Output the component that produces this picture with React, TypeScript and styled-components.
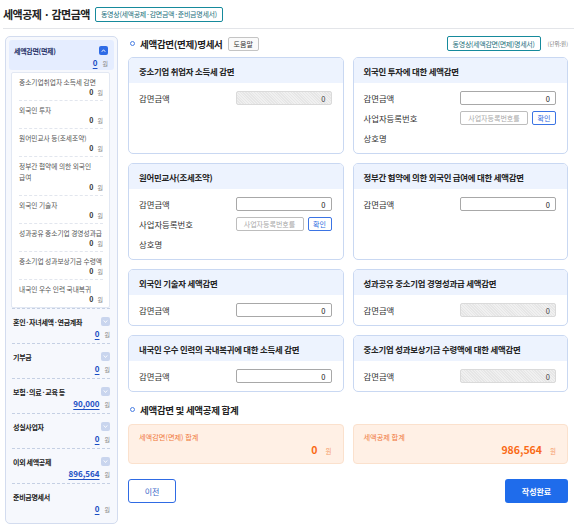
import React from "react";
import styled, { createGlobalStyle, css } from "styled-components";

const GlobalStyle = createGlobalStyle`
  html, body { margin: 0; padding: 0; background: #fff; }
  body {
    font-family: "Noto Sans CJK KR", "Noto Sans", sans-serif;
    color: #222;
    -webkit-font-smoothing: antialiased;
    word-break: keep-all;
  }
  * { box-sizing: border-box; }
  button, input { font-family: inherit; }
`;

const Page = styled.div`
  width: 574px;
  height: 529px;
  overflow: hidden;
  background: #fff;
`;

const TopBar = styled.header`
  margin-left: 3px;
  height: 29px;
  display: flex;
  align-items: center;
  gap: 5px;
  border-bottom: 1px solid #e3e5e9;
`;

const PageTitle = styled.h1`
  margin: 0;
  font-size: 11px;
  font-weight: 700;
  letter-spacing: -0.5px;
  color: #222;
`;

const VideoButton = styled.button`
  height: 15px;
  padding: 0 5px;
  border: 1px solid #168a9c;
  border-radius: 2px;
  background: #fff;
  color: #1a6f7d;
  font-size: 7px;
  letter-spacing: -0.3px;
  white-space: nowrap;
`;

const Body = styled.div`
  display: flex;
  gap: 10px;
  padding: 7px 6px 0 5px;
`;

/* ---------- sidebar ---------- */

const Sidebar = styled.aside`
  width: 113px;
  height: 488px;
  flex: none;
  overflow: hidden;
  border: 1px solid #d3dcef;
  border-radius: 5px;
  background: #f6f8fd;
  padding: 3px;
`;

const ActiveItem = styled.div`
  height: 30px;
  background: #e5edff;
  border-radius: 3px;
  padding: 4px 6px 0 5px;
`;

const ItemHead = styled.div`
  display: flex;
  align-items: center;
  justify-content: space-between;
  height: 13px;
`;

const GroupLabel = styled.span<{ $tone?: "navy" | "dark" }>`
  font-size: 7px;
  font-weight: 700;
  letter-spacing: -0.3px;
  color: ${(p) => (p.$tone === "navy" ? "#1f2f66" : "#222")};
`;

const ValueLine = styled.div`
  display: flex;
  justify-content: flex-end;
  align-items: baseline;
  gap: 5px;
  height: 12px;
  line-height: 12px;
`;

const Amount = styled.span<{ $linked?: boolean }>`
  font-size: 8px;
  font-weight: 700;
  ${(p) =>
    p.$linked
      ? css`
          color: #1c4fc4;
          text-decoration: underline;
          text-underline-offset: 2px;
        `
      : css`
          color: #333;
        `}
`;

const Won = styled.span`
  font-size: 6px;
  color: #888;
`;

const SubBox = styled.div`
  margin: 2px 4px 0 2px;
  background: #fff;
  border: 1px solid #e2e8f3;
  border-radius: 2px;
  padding: 0 6px 0 7px;
`;

const SubItem = styled.div`
  padding: 4px 0 3px;
  border-bottom: 1px dashed #e2e6ee;
  &:last-child {
    border-bottom: none;
  }
`;

const SubLabel = styled.div`
  font-size: 6.7px;
  line-height: 11px;
  color: #555;
  word-break: keep-all;
`;

const SubValue = styled.div`
  display: flex;
  justify-content: flex-end;
  align-items: baseline;
  gap: 4px;
  line-height: 9px;
`;

const SubAmount = styled.span`
  font-size: 7px;
  font-weight: 700;
  color: #333;
`;

const Group = styled.div`
  margin: 0 4px 0 3px;
  padding: 6px 0 4px 1px;
  height: 35px;
  border-top: 1px dashed #c5d0e4;
  &:first-of-type {
    margin-top: 4px;
  }
`;

const ChevronBox = styled.span<{ $active?: boolean }>`
  width: 9px;
  height: 9px;
  border-radius: 2px;
  background: ${(p) => (p.$active ? "#2e6be6" : "#c9d5ee")};
  display: inline-flex;
  align-items: center;
  justify-content: center;
`;

function Chevron({ up }: { up?: boolean }) {
  return (
    <ChevronBox $active={up}>
      <svg width="5" height="5" viewBox="0 0 10 10">
        <polyline
          points={up ? "2,7 5,3.5 8,7" : "2,3.5 5,7 8,3.5"}
          fill="none"
          stroke="#fff"
          strokeWidth="1.8"
          strokeLinecap="round"
          strokeLinejoin="round"
        />
      </svg>
    </ChevronBox>
  );
}

/* ---------- main ---------- */

const Main = styled.main`
  flex: 1;
  min-width: 0;
`;

const SectionHead = styled.div<{ $gap?: number }>`
  display: flex;
  align-items: center;
  height: 15px;
  margin-top: ${(p) => p.$gap ?? 0}px;
`;

const Ring = styled.span`
  width: 5px;
  height: 5px;
  border: 1.2px solid #4a7fe2;
  border-radius: 50%;
  margin: 0 5px 0 2px;
`;

const SectionTitle = styled.h2`
  margin: 0;
  font-size: 9.5px;
  font-weight: 700;
  letter-spacing: -0.3px;
  color: #222;
`;

const HelpButton = styled.button`
  margin-left: 5px;
  height: 14px;
  padding: 0 5px;
  border: 1px solid #c4c4c4;
  border-radius: 2px;
  background: #fafafa;
  color: #333;
  font-size: 7px;
`;

const HeadRight = styled.div`
  margin-left: auto;
  display: flex;
  align-items: center;
  gap: 7px;
`;

const Unit = styled.span`
  font-size: 5.5px;
  color: #777;
`;

const CardGrid = styled.div`
  margin-top: 6px;
  display: grid;
  grid-template-columns: 1fr 1fr;
  gap: 9px;
`;

const Card = styled.section`
  border: 1px solid #c9d8f2;
  border-radius: 5px;
  overflow: hidden;
  background: #fff;
`;

const CardHeader = styled.div`
  height: 25px;
  display: flex;
  align-items: center;
  padding: 0 10px;
  background: #edf3fe;
  font-size: 8.4px;
  font-weight: 700;
  letter-spacing: -0.2px;
  color: #222;
  white-space: nowrap;
`;

const CardBody = styled.div`
  padding: 8px 11px 8px 10px;
  display: flex;
  flex-direction: column;
  gap: 6px;
`;

const FieldRow = styled.div`
  display: flex;
  align-items: center;
  justify-content: space-between;
  height: 14px;
`;

const FieldLabel = styled.span`
  font-size: 8.4px;
  color: #333;
`;

const AmountInput = styled.input`
  width: 96px;
  height: 14px;
  padding: 0 5px;
  border: 1px solid #a8a8a8;
  border-radius: 2px;
  text-align: right;
  font-size: 7.5px;
  color: #222;
  background: #fff;
  outline: none;
  &:disabled {
    border-color: #dadada;
    color: #444;
    background: repeating-linear-gradient(
      45deg,
      #e6e6e6 0 1px,
      #f0f0f0 1px 2px
    );
  }
`;

const BizGroup = styled.div`
  display: flex;
  gap: 4px;
`;

const BizInput = styled.input`
  width: 68px;
  height: 14px;
  padding: 0 3px;
  border: 1px solid #bdbdbd;
  border-radius: 2px;
  font-size: 7px;
  text-align: center;
  outline: none;
  &::placeholder {
    color: #a9a9a9;
  }
`;

const ConfirmButton = styled.button`
  width: 24px;
  height: 14px;
  padding: 0;
  border: 1px solid #3b74e4;
  border-radius: 2px;
  background: #fff;
  color: #2f6be0;
  font-size: 7px;
`;

const TotalGrid = styled.div`
  margin-top: 7px;
  display: grid;
  grid-template-columns: 1fr 1fr;
  gap: 9px;
`;

const TotalCard = styled.div`
  height: 40px;
  padding: 6px 11px 0 10px;
  background: #fff0e5;
  border: 1px solid #fbe1cd;
  border-radius: 4px;
`;

const TotalLabel = styled.div`
  font-size: 7.2px;
  line-height: 12px;
  color: #f0783c;
`;

const TotalValue = styled.div`
  display: flex;
  justify-content: flex-end;
  align-items: baseline;
  gap: 8px;
  line-height: 14px;
`;

const TotalAmount = styled.span`
  font-size: 10.5px;
  font-weight: 700;
  color: #fa6a16;
`;

const TotalWon = styled.span`
  font-size: 6.5px;
  color: #f59a68;
`;

const Actions = styled.div`
  margin-top: 15px;
  display: flex;
  justify-content: space-between;
`;

const ActionButton = styled.button<{ $primary?: boolean }>`
  height: 24px;
  border-radius: 3px;
  font-size: 8px;
  ${(p) =>
    p.$primary
      ? css`
          width: 63px;
          border: none;
          background: #1f6ceb;
          color: #fff;
          font-weight: 700;
        `
      : css`
          width: 48px;
          border: 1px solid #2f6be4;
          background: #fff;
          color: #3a66c9;
        `}
`;

/* ---------- data ---------- */

const subItems = [
  "중소기업취업자 소득세 감면",
  "외국인 투자",
  "원어민교사 등(조세조약)",
  "정부간 협약에 의한 외국인 급여",
  "외국인 기술자",
  "성과공유 중소기업 경영성과급",
  "중소기업 성과보상기금 수령액",
  "내국인 우수 인력 국내복귀",
];

const groups = [
  { label: "혼인·자녀세액·연금계좌", value: "0", chevron: true },
  { label: "기부금", value: "0", chevron: true },
  { label: "보험·의료·교육 등", value: "90,000", chevron: true },
  { label: "성실사업자", value: "0", chevron: true },
  { label: "이외 세액공제", value: "896,564", chevron: true },
  { label: "준비금명세서", value: "0", chevron: false },
];

type CardDef = { title: string; disabled?: boolean; biz?: boolean };

const cards: CardDef[] = [
  { title: "중소기업 취업자 소득세 감면", disabled: true },
  { title: "외국인 투자에 대한 세액감면", biz: true },
  { title: "원어민교사(조세조약)", biz: true },
  { title: "정부간 협약에 의한 외국인 급여에 대한 세액감면" },
  { title: "외국인 기술자 세액감면" },
  { title: "성과공유 중소기업 경영성과급 세액감면", disabled: true },
  { title: "내국인 우수 인력의 국내복귀에 대한 소득세 감면" },
  { title: "중소기업 성과보상기금 수령액에 대한  세액감면", disabled: true },
];

function ReliefCard({ title, disabled, biz }: CardDef) {
  return (
    <Card>
      <CardHeader>{title}</CardHeader>
      <CardBody>
        <FieldRow>
          <FieldLabel>감면금액</FieldLabel>
          <AmountInput value="0" readOnly disabled={disabled} />
        </FieldRow>
        {biz && (
          <>
            <FieldRow>
              <FieldLabel>사업자등록번호</FieldLabel>
              <BizGroup>
                <BizInput placeholder="사업자등록번호를" />
                <ConfirmButton>확인</ConfirmButton>
              </BizGroup>
            </FieldRow>
            <FieldRow>
              <FieldLabel>상호명</FieldLabel>
            </FieldRow>
          </>
        )}
      </CardBody>
    </Card>
  );
}

export default function App() {
  return (
    <Page>
      <GlobalStyle />
      <TopBar>
        <PageTitle>세액공제 · 감면금액</PageTitle>
        <VideoButton>동영상(세액공제·감면금액·준비금명세서)</VideoButton>
      </TopBar>
      <Body>
        <Sidebar>
          <ActiveItem>
            <ItemHead>
              <GroupLabel $tone="navy">세액감면(면제)</GroupLabel>
              <Chevron up />
            </ItemHead>
            <ValueLine>
              <Amount $linked>0</Amount>
              <Won>원</Won>
            </ValueLine>
          </ActiveItem>
          <SubBox>
            {subItems.map((label) => (
              <SubItem key={label}>
                <SubLabel>{label}</SubLabel>
                <SubValue>
                  <SubAmount>0</SubAmount>
                  <Won>원</Won>
                </SubValue>
              </SubItem>
            ))}
          </SubBox>
          {groups.map((g) => (
            <Group key={g.label}>
              <ItemHead>
                <GroupLabel>{g.label}</GroupLabel>
                {g.chevron && <Chevron />}
              </ItemHead>
              <ValueLine>
                <Amount $linked>{g.value}</Amount>
                <Won>원</Won>
              </ValueLine>
            </Group>
          ))}
        </Sidebar>
        <Main>
          <SectionHead>
            <Ring />
            <SectionTitle>세액감면(면제)명세서</SectionTitle>
            <HelpButton>도움말</HelpButton>
            <HeadRight>
              <VideoButton>동영상(세액감면(면제)명세서)</VideoButton>
              <Unit>(단위:원)</Unit>
            </HeadRight>
          </SectionHead>
          <CardGrid>
            {cards.map((c) => (
              <ReliefCard key={c.title} {...c} />
            ))}
          </CardGrid>
          <SectionHead $gap={10}>
            <Ring />
            <SectionTitle>세액감면 및 세액공제 합계</SectionTitle>
          </SectionHead>
          <TotalGrid>
            <TotalCard>
              <TotalLabel>세액감면(면제) 합계</TotalLabel>
              <TotalValue>
                <TotalAmount>0</TotalAmount>
                <TotalWon>원</TotalWon>
              </TotalValue>
            </TotalCard>
            <TotalCard>
              <TotalLabel>세액공제 합계</TotalLabel>
              <TotalValue>
                <TotalAmount>986,564</TotalAmount>
                <TotalWon>원</TotalWon>
              </TotalValue>
            </TotalCard>
          </TotalGrid>
          <Actions>
            <ActionButton>이전</ActionButton>
            <ActionButton $primary>작성완료</ActionButton>
          </Actions>
        </Main>
      </Body>
    </Page>
  );
}
